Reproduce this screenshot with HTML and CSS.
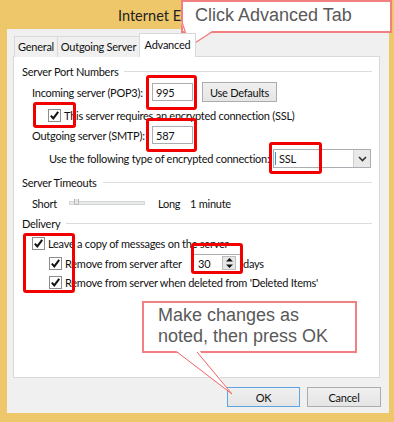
FILE: index.html
```html
<!DOCTYPE html>
<html>
<head>
<meta charset="utf-8">
<link rel="stylesheet" href="styles.css">
</head>
<body>
<div class="window">
  <div class="titlebar"><span class="title">Internet E</span></div>
  <div class="client">
    <div class="tabs">
      <div class="tab t-general">General</div>
      <div class="tab t-outgoing">Outgoing Server</div>
      <div class="tab t-adv active">Advanced</div>
    </div>
    <div class="panel">
      <div class="group-head g1"><span>Server Port Numbers</span></div>
      <div class="row port r-in">
        <span class="lbl-port">Incoming server (POP3):</span>
        <span class="field">995</span>
        <span class="btn btn-defaults">Use Defaults</span>
      </div>
      <div class="row check r-ssl">
        <svg class="cb" width="13" height="13" viewBox="0 0 13 13"><rect x="0.5" y="0.5" width="12" height="12" fill="#fff" stroke="#8c8c8c"/><path d="M2.8 6.6 L5.3 9.4 L10.2 2.8" fill="none" stroke="#111" stroke-width="2"/></svg>
        <span>This server requires an encrypted connection (SSL)</span>
      </div>
      <div class="row port r-out">
        <span class="lbl-port">Outgoing server (SMTP):</span>
        <span class="field">587</span>
      </div>
      <div class="row r-enc">
        <span class="lbl-enc">Use the following type of encrypted connection:</span>
        <span class="select"><span class="sel-text">SSL</span><span class="sel-btn"><svg width="9" height="6" viewBox="0 0 9 6"><path d="M1 1 L4.5 4.5 L8 1" fill="none" stroke="#333" stroke-width="1.6"/></svg></span></span>
      </div>
      <div class="group-head g2"><span>Server Timeouts</span></div>
      <div class="row r-slider">
        <span class="lbl-short">Short</span>
        <span class="track"><span class="thumb"></span></span>
        <span class="lbl-long">Long</span>
        <span>1 minute</span>
      </div>
      <div class="group-head g3"><span>Delivery</span></div>
      <div class="row check r-leave">
        <svg class="cb" width="13" height="13" viewBox="0 0 13 13"><rect x="0.5" y="0.5" width="12" height="12" fill="#fff" stroke="#8c8c8c"/><path d="M2.8 6.6 L5.3 9.4 L10.2 2.8" fill="none" stroke="#111" stroke-width="2"/></svg>
        <span>Leave a copy of messages on the server</span>
      </div>
      <div class="row check r-after">
        <svg class="cb" width="13" height="13" viewBox="0 0 13 13"><rect x="0.5" y="0.5" width="12" height="12" fill="#fff" stroke="#8c8c8c"/><path d="M2.8 6.6 L5.3 9.4 L10.2 2.8" fill="none" stroke="#111" stroke-width="2"/></svg>
        <span class="lbl-after">Remove from server after</span>
        <span class="spin"><span class="spin-text">30</span><span class="spin-btn"><svg width="9" height="12" viewBox="0 0 9 12"><path d="M4.5 1 L8 4.5 L1 4.5 Z M4.5 11 L8 7.5 L1 7.5 Z" fill="#111"/></svg></span></span>
        <span class="lbl-days">days</span>
      </div>
      <div class="row check r-deleted">
        <svg class="cb" width="13" height="13" viewBox="0 0 13 13"><rect x="0.5" y="0.5" width="12" height="12" fill="#fff" stroke="#8c8c8c"/><path d="M2.8 6.6 L5.3 9.4 L10.2 2.8" fill="none" stroke="#111" stroke-width="2"/></svg>
        <span>Remove from server when deleted from 'Deleted Items'</span>
      </div>
    </div>
    <div class="buttons">
      <span class="btn btn-ok">OK</span>
      <span class="btn btn-cancel">Cancel</span>
    </div>
  </div>

  <div class="hl hl-in"></div>
  <div class="hl hl-ssl"></div>
  <div class="hl hl-out"></div>
  <div class="hl hl-enc"></div>
  <div class="hl hl-del"></div>
  <div class="hl hl-spin"></div>

  <div class="callout callout-tab">Click Advanced Tab</div>
  <div class="callout callout-ok">Make changes as<br>noted, then press OK</div>
  <svg class="tails" width="394" height="422" viewBox="0 0 394 422">
    <polygon points="181,22 212,31 190,46" fill="#fff"/>
    <polyline points="182,22 190,46 212,32" fill="none" stroke="#f27a7a" stroke-width="1.2"/>
    <polygon points="175,350 199,350 232,394" fill="#fff"/>
    <polyline points="177,352 232,394 197,352" fill="none" stroke="#f06262" stroke-width="1"/>
  </svg>
</div>
</body>
</html>
```

FILE: styles.css
```css
* { box-sizing: border-box; }
html, body { margin: 0; padding: 0; }
body {
  width: 394px;
  height: 422px;
  overflow: hidden;
  font-family: Lato, "Noto Sans", sans-serif;
  font-size: 11px;
  letter-spacing: -0.25px;
  color: #111;
}
.window {
  position: relative;
  width: 394px;
  height: 422px;
  background: #eec76a;
  padding: 0 5px 9px 7px;
  display: flex;
  flex-direction: column;
}
.titlebar {
  height: 29px;
  padding: 6px 0 0 111px;
  white-space: nowrap;
}
.title {
  font-size: 14.5px;
  letter-spacing: 0;
  line-height: 20px;
  color: #222;
}
.client {
  flex: 1;
  background: #f0f0f0;
  padding: 0 9px 0 6px;
  display: flex;
  flex-direction: column;
}
.tabs {
  display: flex;
  align-items: flex-end;
  height: 28px;
  padding: 4px 0 0 1px;
  margin-bottom: -1px;
  position: relative;
  z-index: 1;
}
.tab {
  height: 21px;
  border: 1px solid #d9d9d9;
  border-bottom: none;
  background: #f0f0f0;
  display: flex;
  align-items: center;
  justify-content: center;
  padding-bottom: 1px;
  white-space: nowrap;
}
.t-general { width: 44px; }
.t-outgoing { width: 83px; margin-left: -1px; }
.t-adv { width: 57px; margin-left: -1px; }
.tab.active {
  height: 24px;
  background: #fff;
  padding-bottom: 2px;
}
.panel {
  width: 367px;
  height: 322px;
  background: #fff;
  border: 1px solid #d9d9d9;
  padding-top: 7px;
}
.group-head {
  display: flex;
  align-items: center;
  height: 14px;
  padding-left: 8px;
  margin-right: 7px;
  white-space: nowrap;
}
.group-head::after {
  content: "";
  flex: 1;
  height: 1px;
  background: #dcdcdc;
  margin-left: 6px;
}
.g2 { margin-top: 7px; }
.g3 { margin-top: 6px; }
.row {
  display: flex;
  align-items: center;
  white-space: nowrap;
}
.port { height: 18px; padding-left: 18px; }
.r-in { margin-top: 5px; }
.r-out { margin-top: 4px; }
.lbl-port { width: 120px; flex: none; }
.field {
  width: 41px;
  height: 18px;
  border: 1px solid #abadb3;
  background: #fff;
  padding-left: 3px;
  display: flex;
  align-items: center;
}
.btn {
  display: flex;
  align-items: center;
  justify-content: center;
  height: 20px;
  border: 1px solid #acacac;
  background: linear-gradient(#f0f0f0, #e5e5e5);
}
.btn-defaults { width: 75px; margin-left: 9px; }
.check { height: 14px; }
.check .cb { margin-right: 3px; flex: none; }
.r-ssl { margin-top: 7px; padding-left: 34px; }
.r-enc { margin-top: 5px; height: 19px; padding-left: 35px; }
.lbl-enc { width: 224px; flex: none; }
.select {
  width: 98px;
  height: 19px;
  border: 1px solid #abadb3;
  background: #fff;
  display: flex;
  align-items: center;
}
.sel-text {
  flex: 1;
  padding-left: 3px;
  border-left: 1px solid #3b8fd8;
  margin-left: 1px;
  line-height: 13px;
}
.sel-btn {
  width: 17px;
  height: 17px;
  border-left: 1px solid #d0d0d0;
  background: #e9e9e9;
  display: flex;
  align-items: center;
  justify-content: center;
}
.r-slider { margin-top: 7px; height: 14px; padding-left: 18px; }
.lbl-short { width: 37px; flex: none; }
.track {
  position: relative;
  width: 76px;
  height: 4px;
  background: #e7eaea;
  border: 1px solid #d6d6d6;
}
.thumb {
  position: absolute;
  left: 4px;
  top: -3px;
  width: 5px;
  height: 6px;
  background: #e5e5e5;
  border: 1px solid #b5b5b5;
  border-top: none;
  border-radius: 0 0 2px 2px;
}
.lbl-long { width: 32px; margin-left: 13px; flex: none; }
.r-leave { margin-top: 6px; padding-left: 18px; }
.r-after { margin-top: 4px; height: 18px; padding-left: 35px; }
.lbl-after { width: 128px; flex: none; }
.spin {
  width: 48px;
  height: 18px;
  border: 1px solid #abadb3;
  background: #fff;
  display: flex;
  align-items: center;
}
.spin-text { flex: 1; padding-left: 4px; }
.spin-btn {
  width: 14px;
  height: 14px;
  margin-right: 4px;
  background: #e6e6e6;
  border: 1px solid #bdbdbd;
  display: flex;
  align-items: center;
  justify-content: center;
}
.lbl-days { margin-left: 2px; }
.r-deleted { margin-top: 3px; padding-left: 35px; }
.buttons {
  display: flex;
  justify-content: flex-end;
  gap: 7px;
  margin-top: 9px;
}
.btn-ok { width: 73px; border-color: #5ea3e2; }
.btn-cancel { width: 74px; margin-right: -1px; }

.hl {
  position: absolute;
  border: 3px solid #f20000;
  border-radius: 3px;
}
.hl-in { left: 146px; top: 75px; width: 51px; height: 35px; }
.hl-ssl { left: 33px; top: 102px; width: 43px; height: 26px; }
.hl-out { left: 146px; top: 118px; width: 51px; height: 34px; }
.hl-enc { left: 269px; top: 142px; width: 53px; height: 32px; }
.hl-del { left: 23px; top: 233px; width: 52px; height: 60px; }
.hl-spin { left: 191px; top: 243px; width: 52px; height: 31px; }

.callout {
  position: absolute;
  background: #fff;
  border: 2px solid #f38080;
  font-family: "Liberation Sans", Arial, sans-serif;
  font-size: 18px;
  letter-spacing: 0;
  color: #595959;
}
.callout-tab {
  left: 181px;
  top: 0;
  width: 211px;
  height: 33px;
  padding: 3px 0 0 12px;
  line-height: 21px;
}
.callout-ok {
  left: 142px;
  top: 301px;
  width: 215px;
  height: 52px;
  padding: 2px 0 0 14px;
  line-height: 21px;
}
.tails {
  position: absolute;
  left: 0;
  top: 0;
  pointer-events: none;
}
```
